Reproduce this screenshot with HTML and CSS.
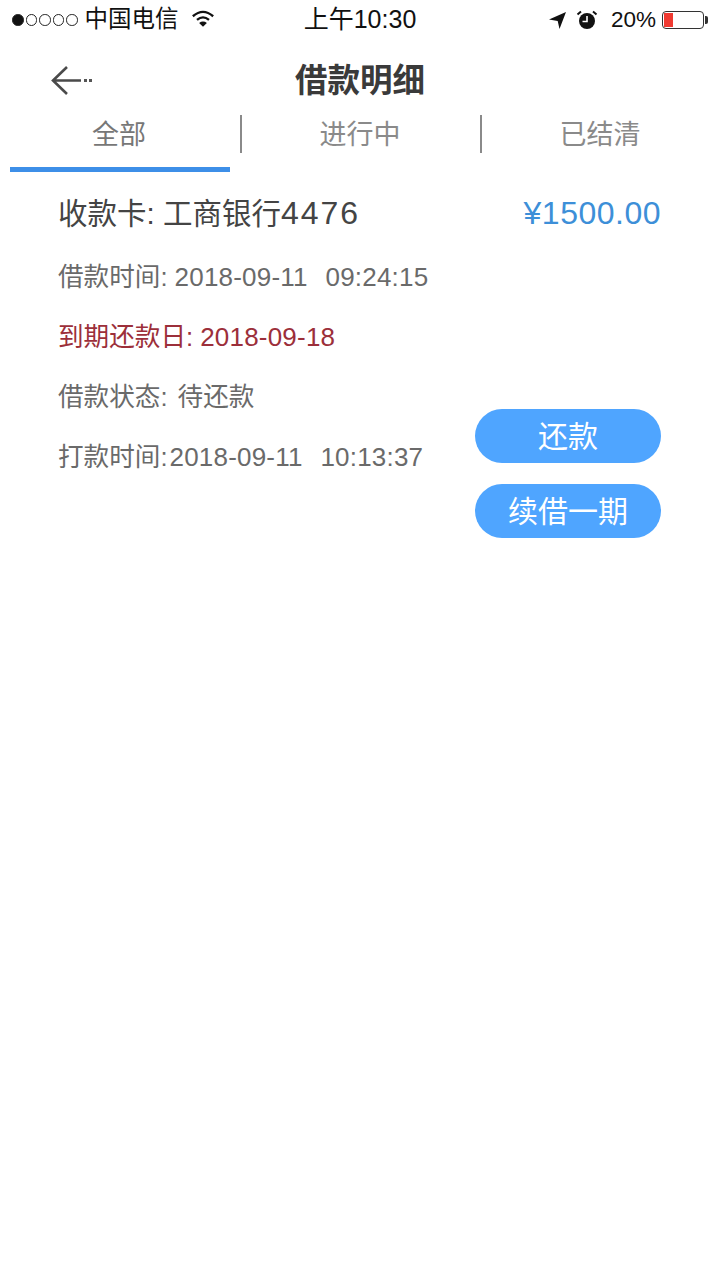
FILE: index.html

```html
<!DOCTYPE html>
<html lang="zh-CN">
<head>
    <meta charset="UTF-8">
    <meta name="viewport" content="width=device-width, initial-scale=1.0">
    <title>借款明细</title>
    <link rel="stylesheet" href="styles.css">
</head>
<body>
    <div class="status-bar">
        <div class="status-left">
            <span class="signal"><i class="dot on"></i><i class="dot"></i><i class="dot"></i><i class="dot"></i><i class="dot"></i></span>
            <span class="carrier">中国电信</span>
            <svg class="wifi" width="24" height="18" viewBox="0 0 26 19">
                <path d="M2 6.500C9 .5 17 .5 24 6.500" fill="none" stroke="#111" stroke-width="2.600"/>
                <path d="M6.500 10.500c4-3.400 9-3.400 13 0" fill="none" stroke="#111" stroke-width="2.600"/>
                <path d="M13 18l-4.200-4.300c2.500-1.900 5.900-1.900 8.400 0z" fill="#111"/>
            </svg>
        </div>
        <div class="status-time">上午10:30</div>
        <div class="status-right">
            <svg class="arrow" width="20" height="20" viewBox="0 0 20 20"><path d="M1 9.500L18 2l-6.500 17-1.800-8z" fill="#111"/></svg>
            <svg width="24" height="22" viewBox="0 0 24 22">
                <circle cx="12" cy="12" r="8" fill="#111"/>
                <path d="M12 7v5.500H7.500" fill="none" stroke="#fff" stroke-width="1.600"/>
                <path d="M2.500 5.500L6 2.500M21.500 5.500L18 2.500" stroke="#111" stroke-width="2"/>
            </svg>
            <span class="battery-text">20%</span>
            <span class="battery"><span class="battery-level"></span></span>
        </div>
    </div>

    <div class="nav">
        <svg class="back" width="46" height="32" viewBox="0 0 46 32">
            <path d="M16 2L2 15.500 16 29M2 15.500h28" fill="none" stroke="#4a4a4a" stroke-width="2.600"/>
            <path d="M33 14h3v3h-3zM38 14h3v3h-3z" fill="#555"/>
        </svg>
        <h1 class="nav-title">借款明细</h1>
    </div>

    <div class="tabs">
        <div class="tab active">全部</div>
        <div class="tab">进行中</div>
        <div class="tab">已结清</div>
    </div>

    <div class="loan">
        <div class="loan-info">
            <div class="card-name">收款卡: 工商银行<span class="card-no">4476</span></div>
            <div class="row">借款时间: <b>2018-09-11&nbsp;&nbsp;09:24:15</b></div>
            <div class="row due">到期还款日: <b>2018-09-18</b></div>
            <div class="row">借款状态: <span class="state">待还款</span></div>
            <div class="row">打款时间:<b class="paid">2018-09-11&nbsp;&nbsp;10:13:37</b></div>
        </div>
        <div class="loan-side">
            <div class="amount">¥1500.00</div>
            <div class="actions">
                <button class="btn">还款</button>
                <button class="btn">续借一期</button>
            </div>
        </div>
    </div>
</body>
</html>
```

FILE: styles.css

```css
:root {
    --blue: #3d8fd8;
    --tab-blue: #3d8fe8;
    --btn-blue: #4fa5ff;
    --text-grey: #6a6a6a;
}

* {
    margin: 0;
    padding: 0;
    box-sizing: border-box;
}

body {
    width: 720px;
    min-height: 1280px;
    background: #fff;
    color: #333;
    font-family: "Liberation Sans", "Noto Sans CJK SC", sans-serif;
}

.status-bar {
    height: 40px;
    display: flex;
    align-items: center;
    justify-content: space-between;
    position: relative;
    padding: 0 12px;
    color: #111;
}

.status-left {
    display: flex;
    align-items: center;
}

.signal {
    display: flex;
    gap: 2px;
}

.dot {
    width: 11.500px;
    height: 11.500px;
    border: 1px solid #222;
    border-radius: 50%;
}

.dot.on {
    background: #111;
}

.carrier {
    font-size: 23.500px;
    line-height: 36px;
    margin-left: 7px;
    padding-bottom: 2px;
}

.wifi {
    margin: 0 0 2px 12px;
}

.status-time {
    position: absolute;
    left: 0;
    right: 0;
    text-align: center;
    font-size: 25px;
    line-height: 38px;
    padding-bottom: 2px;
}

.status-right {
    display: flex;
    align-items: center;
    gap: 6px;
}

.arrow {
    margin-right: 1.500px;
}

.battery-text {
    font-size: 22.500px;
    margin-left: 5.500px;
}

.battery {
    width: 42px;
    height: 18px;
    border: 1px solid #333;
    border-radius: 4px;
    padding: 1px;
    position: relative;
    margin-right: 4px;
}

.battery::after {
    content: '';
    position: absolute;
    right: -5px;
    top: 4px;
    width: 3px;
    height: 8px;
    background: #333;
    border-radius: 0 2px 2px 0;
}

.battery-level {
    display: block;
    width: 9px;
    height: 100%;
    background: #f03a32;
}

.nav {
    height: 72px;
    display: flex;
    align-items: center;
    justify-content: center;
    position: relative;
}

.back {
    position: absolute;
    left: 51px;
    top: 25px;
}

.nav-title {
    font-size: 32.500px;
    font-weight: 700;
    color: #3a3a3a;
    padding-top: 2px;
}

.tabs {
    display: flex;
    height: 60px;
    padding: 0 10px;
}

.tab {
    flex: 0 0 240px;
    height: 60px;
    display: flex;
    align-items: center;
    justify-content: center;
    font-size: 27px;
    color: #8a8a8a;
    position: relative;
    padding: 0 2px 19px 0;
}

.tab:first-child {
    flex-basis: 220px;
    margin-right: 10px;
}

.tab:not(:first-child) {
    border-left: 2px solid transparent;
}

.tab:not(:last-child)::after {
    content: '';
    position: absolute;
    right: -2px;
    top: 3px;
    width: 2px;
    height: 38px;
    background: #8a8a8a;
}

.tab:first-child::after {
    right: -12px;
}

.tab.active {
    color: #777;
    border-bottom: 5px solid var(--tab-blue);
    padding-bottom: 14px;
}

.loan {
    display: flex;
    justify-content: space-between;
    padding: 19px 59px 0 58px;
}

.card-name {
    font-size: 29.500px;
    line-height: 44px;
    color: #444;
    margin-bottom: 21px;
}

.card-no {
    font-size: 32px;
    letter-spacing: 2px;
}

.row {
    font-size: 25.600px;
    line-height: 40px;
    color: var(--text-grey);
    margin-bottom: 20px;
}

.row b {
    font-size: 26px;
    font-weight: 400;
    letter-spacing: 0.200px;
    word-spacing: 1.500px;
}

.row b.paid {
    margin-left: 2px;
}

.row .state {
    margin-left: 3px;
}

.row.due {
    color: #9c2f3a;
}

.loan-side {
    display: flex;
    flex-direction: column;
    align-items: flex-end;
}

.amount {
    font-size: 32px;
    line-height: 44px;
    color: var(--blue);
    letter-spacing: 0.500px;
}

.actions {
    margin-top: 174px;
    display: flex;
    flex-direction: column;
    gap: 21px;
}

.btn {
    width: 186px;
    height: 54px;
    border: none;
    border-radius: 27px;
    background: var(--btn-blue);
    color: #fff;
    font-family: inherit;
    font-size: 30px;
    padding-bottom: 4px;
}
```
